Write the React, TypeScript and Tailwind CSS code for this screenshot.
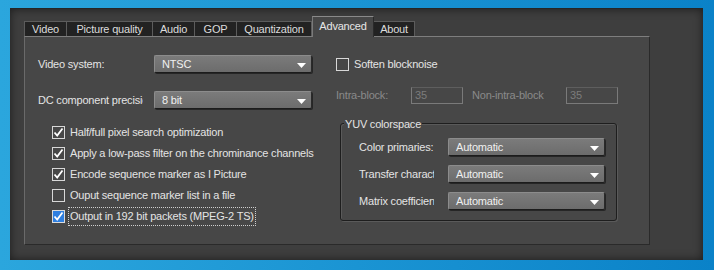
import type { ReactNode } from 'react';

const font = { fontFamily: '"Liberation Sans", Arial, sans-serif' };
const txt = 'text-[11px] tracking-[-0.2px] whitespace-nowrap';

function Tab({ label, active, w }: { label: string; active?: boolean; w: string }) {
  if (active) {
    return (
      <div
        className={`${w} h-[21px] -mb-px relative z-10 flex items-center justify-center pb-[2px] bg-[#474747] border border-b-0 border-t-[#8a8a8a] border-l-[#7a7a7a] border-r-[#2a2a2a] ${txt} text-[#e6e6e6]`}
      >
        {label}
      </div>
    );
  }
  return (
    <div
      className={`${w} h-[15px] flex items-center justify-center bg-[#222222] border border-b-0 border-[#5c5c5c] border-l-0 first:border-l ${txt} text-[#dcdcdc]`}
    >
      {label}
    </div>
  );
}

function Select({ value, w }: { value: string; w: string }) {
  return (
    <div
      className={`${w} h-[18px] shrink-0 flex items-center justify-between pl-[7px] pr-[5px] rounded-[2px] bg-gradient-to-b from-[#7b7b7b] to-[#6c6c6c] border border-[#8c8c8c] border-b-[#1c1c1c] border-r-[#2a2a2a] shadow-[1px_1px_0_#262626] ${txt} text-[#f0f0f0]`}
    >
      <span>{value}</span>
      <svg width="9" height="5" viewBox="0 0 9 5" className="mt-[2px]">
        <polygon points="0,0 9,0 4.5,5" fill="#ffffff" />
      </svg>
    </div>
  );
}

function Check({ checked, blue }: { checked?: boolean; blue?: boolean }) {
  return (
    <div
      className={`w-[13px] h-[13px] shrink-0 border ${blue ? 'border-[#dcdcdc] bg-[#2f7fe0]' : 'border-[#d8d8d8]'} flex items-center justify-center`}
    >
      {checked && (
        <svg width="11" height="11" viewBox="0 0 11 11">
          <path d="M1.5 5.5 L4.2 8.5 L9.5 1.5" stroke="#ffffff" strokeWidth="1.8" fill="none" />
        </svg>
      )}
    </div>
  );
}

function CheckRow({ children, checked, blue, focus }: { children: ReactNode; checked?: boolean; blue?: boolean; focus?: boolean }) {
  return (
    <div className="h-[21px] flex items-center gap-[5px]">
      <Check checked={checked} blue={blue} />
      <span
        className={`${txt} text-[#e4e4e4] ${focus ? 'outline outline-1 outline-dotted outline-[#cfcfcf] px-px -ml-px' : ''}`}
      >
        {children}
      </span>
    </div>
  );
}

function NumBox() {
  return (
    <div className={`w-[52px] h-[17px] shrink-0 flex items-center pl-[3px] border border-[#7a7a7a] border-t-[#5e5e5e] bg-[#474747] ${txt} text-[#7c7c7c]`}>
      35
    </div>
  );
}

export default function App() {
  return (
    <div
      className="w-[714px] h-[270px] pt-[8px] pl-[10px] pr-[11px] pb-[10px] bg-gradient-to-r from-[#2ba6dd] via-[#1a94d3] to-[#0a82c8]"
      style={font}
    >
      <div className="w-full h-full bg-[#3e3e3e] border-t border-[#262626] shadow-[inset_0_0_10px_rgba(0,0,0,0.55)] pl-[14px] pt-[6px]">
        <div className="flex items-end h-[21px] w-[625px]">
          <Tab label="Video" w="w-[43px]" />
          <Tab label="Picture quality" w="w-[86px]" />
          <Tab label="Audio" w="w-[42px]" />
          <Tab label="GOP" w="w-[42px]" />
          <Tab label="Quantization" w="w-[75px]" />
          <Tab label="Advanced" active w="w-[62px]" />
          <Tab label="About" w="w-[41px]" />
        </div>
        <div className="w-[626px] h-[209px] bg-[#474747] border border-t-[#7e7e7e] border-l-[#6a6a6a] border-r-[#2a2a2a] border-b-[#2a2a2a] flex pt-[18px]">
          <div className="w-[297px] shrink-0 pl-[13px]">
            <div className="flex items-center h-[18px]">
              <span className={`w-[116px] shrink-0 ${txt} text-[#e4e4e4]`}>Video system:</span>
              <Select value="NTSC" w="w-[158px]" />
            </div>
            <div className="flex items-center h-[18px] mt-[18px]">
              <span className={`w-[105px] shrink-0 mr-[11px] overflow-hidden ${txt} text-[#e4e4e4]`}>
                DC component precision:
              </span>
              <Select value="8 bit" w="w-[158px]" />
            </div>
            <div className="mt-[13px] pl-[14px]">
              <CheckRow checked>Half/full pixel search optimization</CheckRow>
              <CheckRow checked>Apply a low-pass filter on the chrominance channels</CheckRow>
              <CheckRow checked>Encode sequence marker as I Picture</CheckRow>
              <CheckRow>Ouput sequence marker list in a file</CheckRow>
              <CheckRow checked blue focus>
                Output in 192 bit packets (MPEG-2 TS)
              </CheckRow>
            </div>
          </div>
          <div className="w-[300px] shrink-0 pl-[14px]">
            <div className="flex items-center gap-[5px] h-[18px]">
              <Check />
              <span className={`${txt} text-[#e4e4e4]`}>Soften blocknoise</span>
            </div>
            <div className="flex items-center h-[17px] mt-[14px]">
              <span className={`w-[75px] shrink-0 ${txt} text-[#8a8a8a]`}>Intra-block:</span>
              <NumBox />
              <span className={`w-[103px] shrink-0 pl-[9px] ${txt} text-[#8a8a8a]`}>Non-intra-block</span>
              <NumBox />
            </div>
            <div className="relative mt-[19px] ml-[4px] w-[277px] h-[98px] border border-[#1e1e1e] rounded-[3px] shadow-[inset_1px_1px_0_#5a5a5a,1px_1px_0_#5a5a5a] pt-[14px] pl-[18px]">
              <span className={`absolute -top-[8px] left-[3px] px-px bg-[#474747] ${txt} text-[#e4e4e4]`}>
                YUV colorspace
              </span>
              {['Color primaries:', 'Transfer characteristics:', 'Matrix coefficients:'].map((l, i) => (
                <div key={l} className={`flex items-center h-[18px] ${i > 0 ? 'mt-[9px]' : ''}`}>
                  <span className={`w-[75px] shrink-0 mr-[14px] overflow-hidden ${txt} text-[#e4e4e4]`}>{l}</span>
                  <Select value="Automatic" w="w-[157px]" />
                </div>
              ))}
            </div>
          </div>
        </div>
      </div>
    </div>
  );
}
